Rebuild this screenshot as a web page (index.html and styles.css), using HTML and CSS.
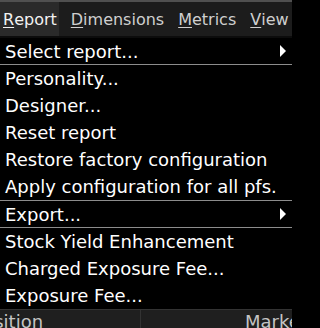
FILE: index.html
```html
<!DOCTYPE html>
<html>
<head>
<meta charset="utf-8">
<link rel="stylesheet" href="styles.css">
</head>
<body>
<div class="app">
  <div class="menubar">
    <span class="mitem active"><u>R</u>eport</span>
    <span class="mitem"><u>D</u>imensions</span>
    <span class="mitem"><u>M</u>etrics</span>
    <span class="mitem"><u>V</u>iew</span>
  </div>
  <div class="dropdown">
    <div class="row sub">Select report...<span class="arrow"></span></div>
    <div class="sep"></div>
    <div class="row">Personality...</div>
    <div class="row">Designer...</div>
    <div class="row">Reset report</div>
    <div class="row">Restore factory configuration</div>
    <div class="row">Apply configuration for all pfs.</div>
    <div class="sep"></div>
    <div class="row sub">Export...<span class="arrow"></span></div>
    <div class="sep"></div>
    <div class="row">Stock Yield Enhancement</div>
    <div class="row">Charged Exposure Fee...</div>
    <div class="row">Exposure Fee...</div>
  </div>
  <div class="header">
    <div class="hcell first"><span class="htext">Position</span></div>
    <div class="hcell second"><span class="htext">Market Value</span></div>
  </div>
</div>
</body>
</html>
```
FILE: styles.css
```css
html, body {
  margin: 0;
  padding: 0;
  background: #000;
  overflow: hidden;
}
.app {
  width: 292px;
  height: 328px;
  overflow: hidden;
  font-family: "DejaVu Sans", Verdana, sans-serif;
  font-size: 18px;
}
.menubar {
  display: flex;
  height: 34px;
  align-items: stretch;
  background: #1c1c1c;
  border-top: 2px solid #505050;
  border-bottom: 2px solid #0c0c0c;
  font-size: 16px;
}
.mitem {
  display: flex;
  align-items: center;
  padding: 0 7px;
  color: #cfcfcf;
  white-space: nowrap;
}
.mitem.active {
  background: #2a2a2a;
  color: #f2f2f2;
  padding: 0 2px 0 3px;
  margin-right: 5px;
}
.mitem u {
  text-underline-offset: 2px;
}
.dropdown {
  background: #000;
  color: #fff;
}
.row {
  height: 27px;
  display: flex;
  align-items: center;
  padding-left: 5px;
  white-space: nowrap;
}
.row.sub {
  justify-content: space-between;
  padding-right: 6px;
  height: 26px;
}
.arrow {
  width: 0;
  height: 0;
  border-top: 6px solid transparent;
  border-bottom: 6px solid transparent;
  border-left: 6px solid #fff;
}
.sep {
  height: 1px;
  background: #8c8c8c;
}
.header {
  display: grid;
  grid-template-columns: 141px 1fr;
  height: 24px;
  background: #1f1f1f;
  border-top: 1px solid #333;
  color: #c4c4c4;
}
.hcell {
  overflow: hidden;
  white-space: nowrap;
  padding-top: 1px;
}
.hcell.first {
  border-right: 1px solid #333;
}
.hcell.first .htext {
  margin-left: -27px;
}
.hcell.second {
  padding-left: 104px;
}
```
